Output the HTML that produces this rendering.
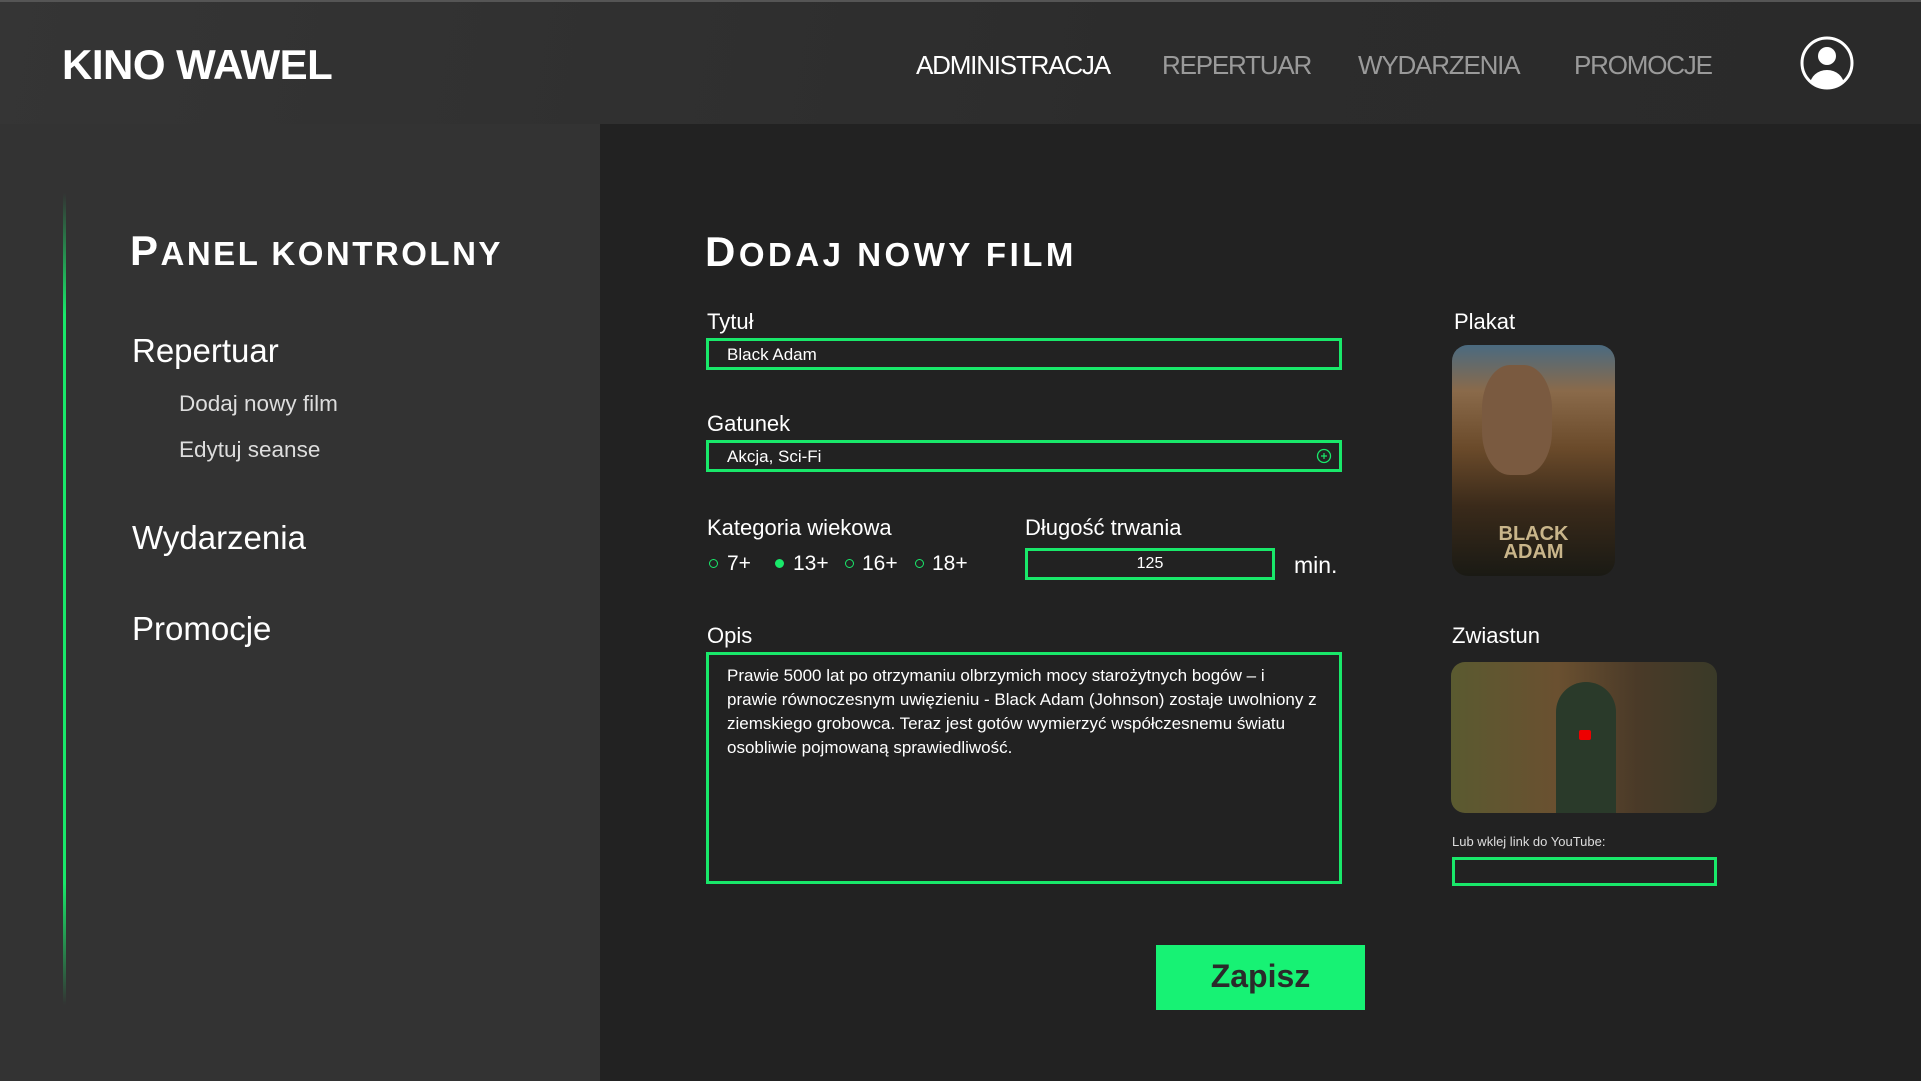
<!DOCTYPE html>
<html><head><meta charset="utf-8"><style>
*{margin:0;padding:0;box-sizing:border-box}
body{width:1921px;height:1081px;background:#222;font-family:"Liberation Sans",sans-serif;color:#fff;position:relative;overflow:hidden}
.a{position:absolute;white-space:nowrap}
.hdr{left:0;top:0;width:1921px;height:124px;background:linear-gradient(100deg,#353535,#2c2c2c 60%,#2a2a2a);border-top:2px solid #555}
.side{left:0;top:124px;width:600px;height:957px;background:#333}
.nav{font-size:26px;top:50px;color:#9a9a9a;letter-spacing:-1.2px}
.box{position:absolute;border:3px solid #19e86a}
.lbl{font-size:22px;color:#fff}
.sc{font-weight:bold;letter-spacing:3px}
.dot{position:absolute;width:9px;height:9px;border-radius:50%;border:1.5px solid #19e86a}
</style></head><body>
<div class="a hdr"></div>
<div class="a side"></div>
<div class="a" style="left:62px;top:41px;font-size:42px;font-weight:bold;letter-spacing:-0.5px">KINO WAWEL</div>
<div class="a nav" style="left:916px;color:#fff">ADMINISTRACJA</div>
<div class="a nav" style="left:1162px">REPERTUAR</div>
<div class="a nav" style="left:1358px">WYDARZENIA</div>
<div class="a nav" style="left:1574px">PROMOCJE</div>
<svg class="a" style="left:1799px;top:35px" width="56" height="56" viewBox="0 0 56 56"><defs><clipPath id="c"><circle cx="28" cy="28" r="24"/></clipPath></defs><circle cx="28" cy="28" r="25" fill="none" stroke="#fff" stroke-width="3"/><g clip-path="url(#c)" fill="#fff"><circle cx="28" cy="21" r="9"/><ellipse cx="28" cy="50" rx="17" ry="15"/></g></svg>

<div class="a" style="left:63px;top:193px;width:3px;height:812px;background:linear-gradient(#333,#19e86a 15%,#19e86a 85%,#333)"></div>
<div class="a sc" style="left:130px;top:227px;font-size:42px;letter-spacing:2.5px">P<span style="font-size:33px">ANEL KONTROLNY</span></div>
<div class="a" style="left:132px;top:332px;font-size:33px">Repertuar</div>
<div class="a" style="left:179px;top:391px;font-size:22.5px;color:#ddd">Dodaj nowy film</div>
<div class="a" style="left:179px;top:437px;font-size:22.5px;color:#ddd">Edytuj seanse</div>
<div class="a" style="left:132px;top:519px;font-size:33px">Wydarzenia</div>
<div class="a" style="left:132px;top:610px;font-size:33px">Promocje</div>

<div class="a sc" style="left:705px;top:228px;font-size:42px;letter-spacing:3.5px">D<span style="font-size:33px">ODAJ NOWY FILM</span></div>
<div class="a lbl" style="left:707px;top:309px">Tytuł</div>
<div class="box" style="left:706px;top:338px;width:636px;height:32px"></div>
<div class="a" style="left:727px;top:345px;font-size:17px">Black Adam</div>
<div class="a lbl" style="left:707px;top:411px">Gatunek</div>
<div class="box" style="left:706px;top:440px;width:636px;height:32px"></div>
<div class="a" style="left:727px;top:447px;font-size:17px">Akcja, Sci-Fi</div>
<svg class="a" style="left:1316px;top:448px" width="16" height="16"><circle cx="8" cy="8" r="6.5" fill="none" stroke="#19e86a" stroke-width="1.3"/><path d="M8 5v6M5 8h6" stroke="#19e86a" stroke-width="1.2"/></svg>

<div class="a lbl" style="left:707px;top:515px">Kategoria wiekowa</div>
<div class="dot" style="left:709px;top:559px"></div><div class="a" style="left:727px;top:552px;font-size:21px">7+</div>
<div class="dot" style="left:775px;top:559px;background:#19e86a"></div><div class="a" style="left:793px;top:552px;font-size:21px">13+</div>
<div class="dot" style="left:845px;top:559px"></div><div class="a" style="left:862px;top:552px;font-size:21px">16+</div>
<div class="dot" style="left:915px;top:559px"></div><div class="a" style="left:932px;top:552px;font-size:21px">18+</div>
<div class="a lbl" style="left:1025px;top:515px">Długość trwania</div>
<div class="box" style="left:1025px;top:548px;width:250px;height:32px"></div>
<div class="a" style="left:1025px;top:555px;width:250px;text-align:center;font-size:16px">125</div>
<div class="a" style="left:1294px;top:552px;font-size:23px">min.</div>

<div class="a lbl" style="left:707px;top:623px">Opis</div>
<div class="box" style="left:706px;top:652px;width:636px;height:232px"></div>
<div class="a" style="left:727px;top:664px;font-size:17px;line-height:24px;white-space:normal;width:590px">Prawie 5000 lat po otrzymaniu olbrzymich mocy starożytnych bogów – i prawie równoczesnym uwięzieniu - Black Adam (Johnson) zostaje uwolniony z ziemskiego grobowca. Teraz jest gotów wymierzyć współczesnemu światu osobliwie pojmowaną sprawiedliwość.</div>

<div class="a lbl" style="left:1454px;top:309px">Plakat</div>
<div class="a" style="left:1452px;top:345px;width:163px;height:231px;border-radius:16px;overflow:hidden;background:linear-gradient(180deg,#4a6a80 0%,#8a6a4a 20%,#6a4a2a 45%,#3a2a1a 70%,#1a1a14 100%)">
<div class="a" style="left:30px;top:20px;width:70px;height:110px;border-radius:40%;background:#7a5a40"></div>
<div class="a" style="left:0;top:180px;width:163px;text-align:center;font-size:20px;font-weight:bold;color:#c9b58a;line-height:18px">BLACK<br>ADAM</div></div>

<div class="a lbl" style="left:1452px;top:623px">Zwiastun</div>
<div class="a" style="left:1451px;top:662px;width:266px;height:151px;border-radius:14px;overflow:hidden;background:linear-gradient(90deg,#5a5a30,#6a5030 40%,#4a3a28 70%,#3a3a28)">
<div class="a" style="left:105px;top:20px;width:60px;height:131px;border-radius:30px 30px 0 0;background:#2a3a2a"></div>
<div class="a" style="left:128px;top:68px;width:12px;height:10px;border-radius:2px;background:#e00"></div></div>
<div class="a" style="left:1452px;top:834px;font-size:13px;color:#ddd">Lub wklej link do YouTube:</div>
<div class="box" style="left:1452px;top:857px;width:265px;height:29px"></div>

<div class="a" style="left:1156px;top:945px;width:209px;height:65px;background:#17f274"></div>
<div class="a" style="left:1156px;top:958px;width:209px;text-align:center;font-size:32px;font-weight:bold;color:#2a2a2a">Zapisz</div>
</body></html>
